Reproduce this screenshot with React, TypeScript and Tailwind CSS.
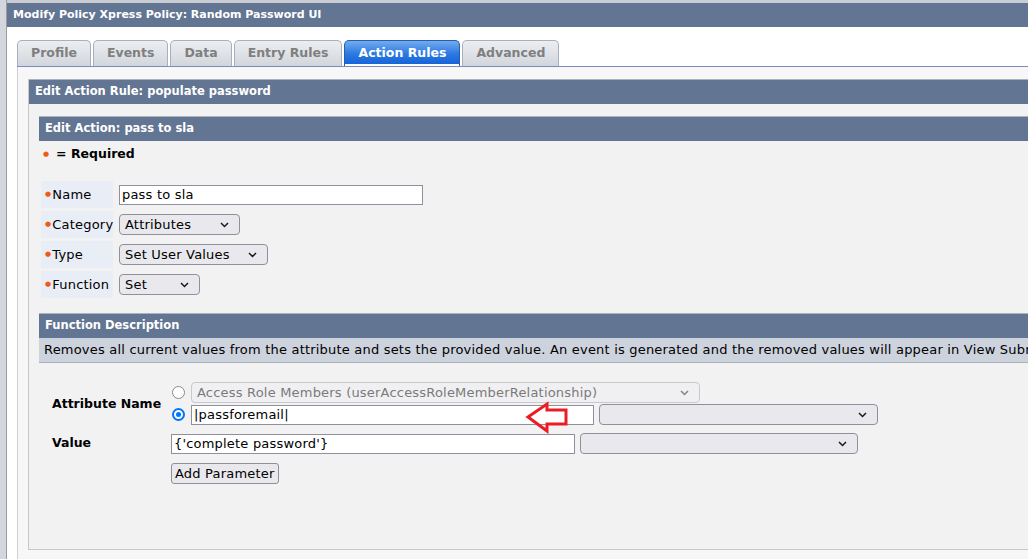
import React from "react";

const Chevron = () => (
  <svg width="9" height="6" viewBox="0 0 9 6" className="shrink-0">
    <path d="M1 1 L4.5 4.5 L8 1" fill="none" stroke="#1a1a1a" strokeWidth="1.5" />
  </svg>
);

function Select({ w, text, disabled }: { w: string; text?: string; disabled?: boolean }) {
  return (
    <div
      className={`${w} h-[21px] rounded-[4px] border flex items-center justify-between pl-[5px] pr-[10px] ${
        disabled ? "border-[#c9c9cc] bg-[#f0f0f2] text-[#7a7a7a]" : "border-[#8f8f9d] bg-[#e9e9ed] text-black"
      }`}
    >
      <span className="whitespace-nowrap">{text ?? ""}</span>
      <span className={disabled ? "opacity-50" : ""}>
        <Chevron />
      </span>
    </div>
  );
}

function TextBox({ w, text }: { w: string; text: string }) {
  return (
    <div className={`${w} h-[20px] border border-[#8f8f9d] bg-white flex items-center pl-[2px] whitespace-nowrap`}>
      {text}
    </div>
  );
}

function Bar({ children }: { children: React.ReactNode }) {
  return (
    <div className="h-[25px] bg-[#627592] border-t border-[#a9b2c0] text-white font-bold text-[11.5px] tracking-normal flex items-center pl-[6px] whitespace-nowrap">
      {children}
    </div>
  );
}

function Tab({ label, active }: { label: string; active?: boolean }) {
  return active ? (
    <div className="h-[26px] px-[13px] rounded-t-[5px] border border-b-0 border-[#2a5cb0] bg-gradient-to-b from-[#72acee] via-[#2c7ae2] to-[#1160d6] text-white font-bold flex items-center relative">
      {label}
      <div className="absolute left-0 right-0 bottom-0 h-[2px] bg-white" />
    </div>
  ) : (
    <div className="h-[26px] px-[13px] rounded-t-[5px] border border-b-0 border-[#a8b0bd] bg-gradient-to-b from-[#eceef1] to-[#d2d6dc] text-[#7f7f7f] font-bold flex items-center">
      {label}
    </div>
  );
}

function FormRow({ label, children }: { label: string; children: React.ReactNode }) {
  return (
    <div className="flex items-center gap-[6px]">
      <div className="w-[72px] h-[27px] bg-[#e8edf6] flex items-center pl-[4px] whitespace-nowrap">
        <span className="text-[#f05a14] text-[7px] mr-[1px]">●</span>
        {label}
      </div>
      {children}
    </div>
  );
}

export default function App() {
  return (
    <div className="relative w-[1028px] h-[559px] overflow-hidden bg-white flex font-['DejaVu_Sans',sans-serif] text-[13px] tracking-[0.2px] text-black">
      <div className="w-[7px] shrink-0 bg-[#d3d6dd] border-r border-[#9a9a9a]" />
      <div className="flex-1 min-w-0 flex flex-col">
        <div className="h-[3px] bg-[#c9ccd2] shrink-0" />
        <div className="h-[24px] bg-[#627592] text-white font-bold text-[11px] tracking-normal flex items-center pl-[6px] shrink-0 whitespace-nowrap">
          Modify Policy Xpress Policy: Random Password UI
        </div>
        <div className="pl-[10px] pt-[13px] flex-1 flex flex-col min-h-0">
          <div className="flex items-end gap-[2px] border-b border-[#7b8ac2] text-[12.5px] tracking-normal">
            <Tab label="Profile" />
            <Tab label="Events" />
            <Tab label="Data" />
            <Tab label="Entry Rules" />
            <Tab label="Action Rules" active />
            <Tab label="Advanced" />
          </div>
          <div className="flex-1 bg-[#f7f7f7] border-l border-[#cfcfcf] pl-[10px] pt-[12px] pb-[9px] flex flex-col min-h-0">
            <div className="flex-1 bg-[#f2f2f2] border-l border-b border-[#c8c8c8] flex flex-col">
              <Bar>Edit Action Rule: populate password</Bar>
              <div className="pl-[10px] pt-[12px] flex flex-col">
                <Bar>Edit Action: pass to sla</Bar>
                <div className="h-[26px] flex items-center pl-[4px] font-bold text-[12.5px] tracking-normal">
                  <span className="text-[#f05a14] text-[7px] mr-[7px] font-normal">●</span>= Required
                </div>
                <div className="mt-[14px] pl-[2px] flex flex-col gap-[3px]">
                  <FormRow label="Name">
                    <TextBox w="w-[304px]" text="pass to sla" />
                  </FormRow>
                  <FormRow label="Category">
                    <Select w="w-[121px]" text="Attributes" />
                  </FormRow>
                  <FormRow label="Type">
                    <Select w="w-[149px]" text="Set User Values" />
                  </FormRow>
                  <FormRow label="Function">
                    <Select w="w-[81px]" text="Set" />
                  </FormRow>
                </div>
                <div className="mt-[15px]">
                  <Bar>Function Description</Bar>
                  <div className="h-[25px] bg-[#cdd3dd] border-b border-[#a9b0bb] flex items-center pl-[5px] whitespace-nowrap overflow-hidden">
                    Removes all current values from the attribute and sets the provided value. An event is generated and the removed values will appear in View Submitted Tasks.
                  </div>
                </div>
                <div className="mt-[19px] flex">
                  <div className="w-[132px] pl-[13px] font-bold text-[12.5px] tracking-normal flex items-center h-[45px]">
                    Attribute Name
                  </div>
                  <div className="flex flex-col gap-[1px]">
                    <div className="flex items-center">
                      <div className="w-[13px] h-[13px] rounded-full border-[1.5px] border-[#8a8a8a] bg-white mr-[6px] ml-[1px]" />
                      <Select w="w-[509px]" text="Access Role Members (userAccessRoleMemberRelationship)" disabled />
                    </div>
                    <div className="flex items-center">
                      <div className="w-[13px] h-[13px] rounded-full border-2 border-[#0075ff] bg-white mr-[6px] ml-[1px] flex items-center justify-center">
                        <div className="w-[5px] h-[5px] rounded-full bg-[#0075ff]" />
                      </div>
                      <TextBox w="w-[403px]" text="|passforemail|" />
                      <div className="ml-[5px]">
                        <Select w="w-[279px]" />
                      </div>
                    </div>
                  </div>
                </div>
                <div className="mt-[6px] flex items-center">
                  <div className="w-[132px] pl-[13px] font-bold text-[12.5px] tracking-normal">Value</div>
                  <TextBox w="w-[404px]" text="{'complete password'}" />
                  <div className="ml-[5px]">
                    <Select w="w-[278px]" />
                  </div>
                </div>
                <div className="mt-[9px] pl-[132px]">
                  <div className="inline-flex h-[21px] items-center px-[3px] border border-[#8f8f9d] rounded-[3px] bg-[#e9e9ed]">
                    Add Parameter
                  </div>
                </div>
              </div>
            </div>
          </div>
        </div>
      </div>
      <svg className="absolute left-[524px] top-[400px]" width="46" height="35" viewBox="0 0 46 35">
        <path
          d="M4 17 L23 4 L23 10 L42 10 L42 24 L23 24 L23 31 Z"
          fill="none"
          stroke="#ec1c24"
          strokeWidth="3"
          strokeLinejoin="miter"
        />
      </svg>
    </div>
  );
}
